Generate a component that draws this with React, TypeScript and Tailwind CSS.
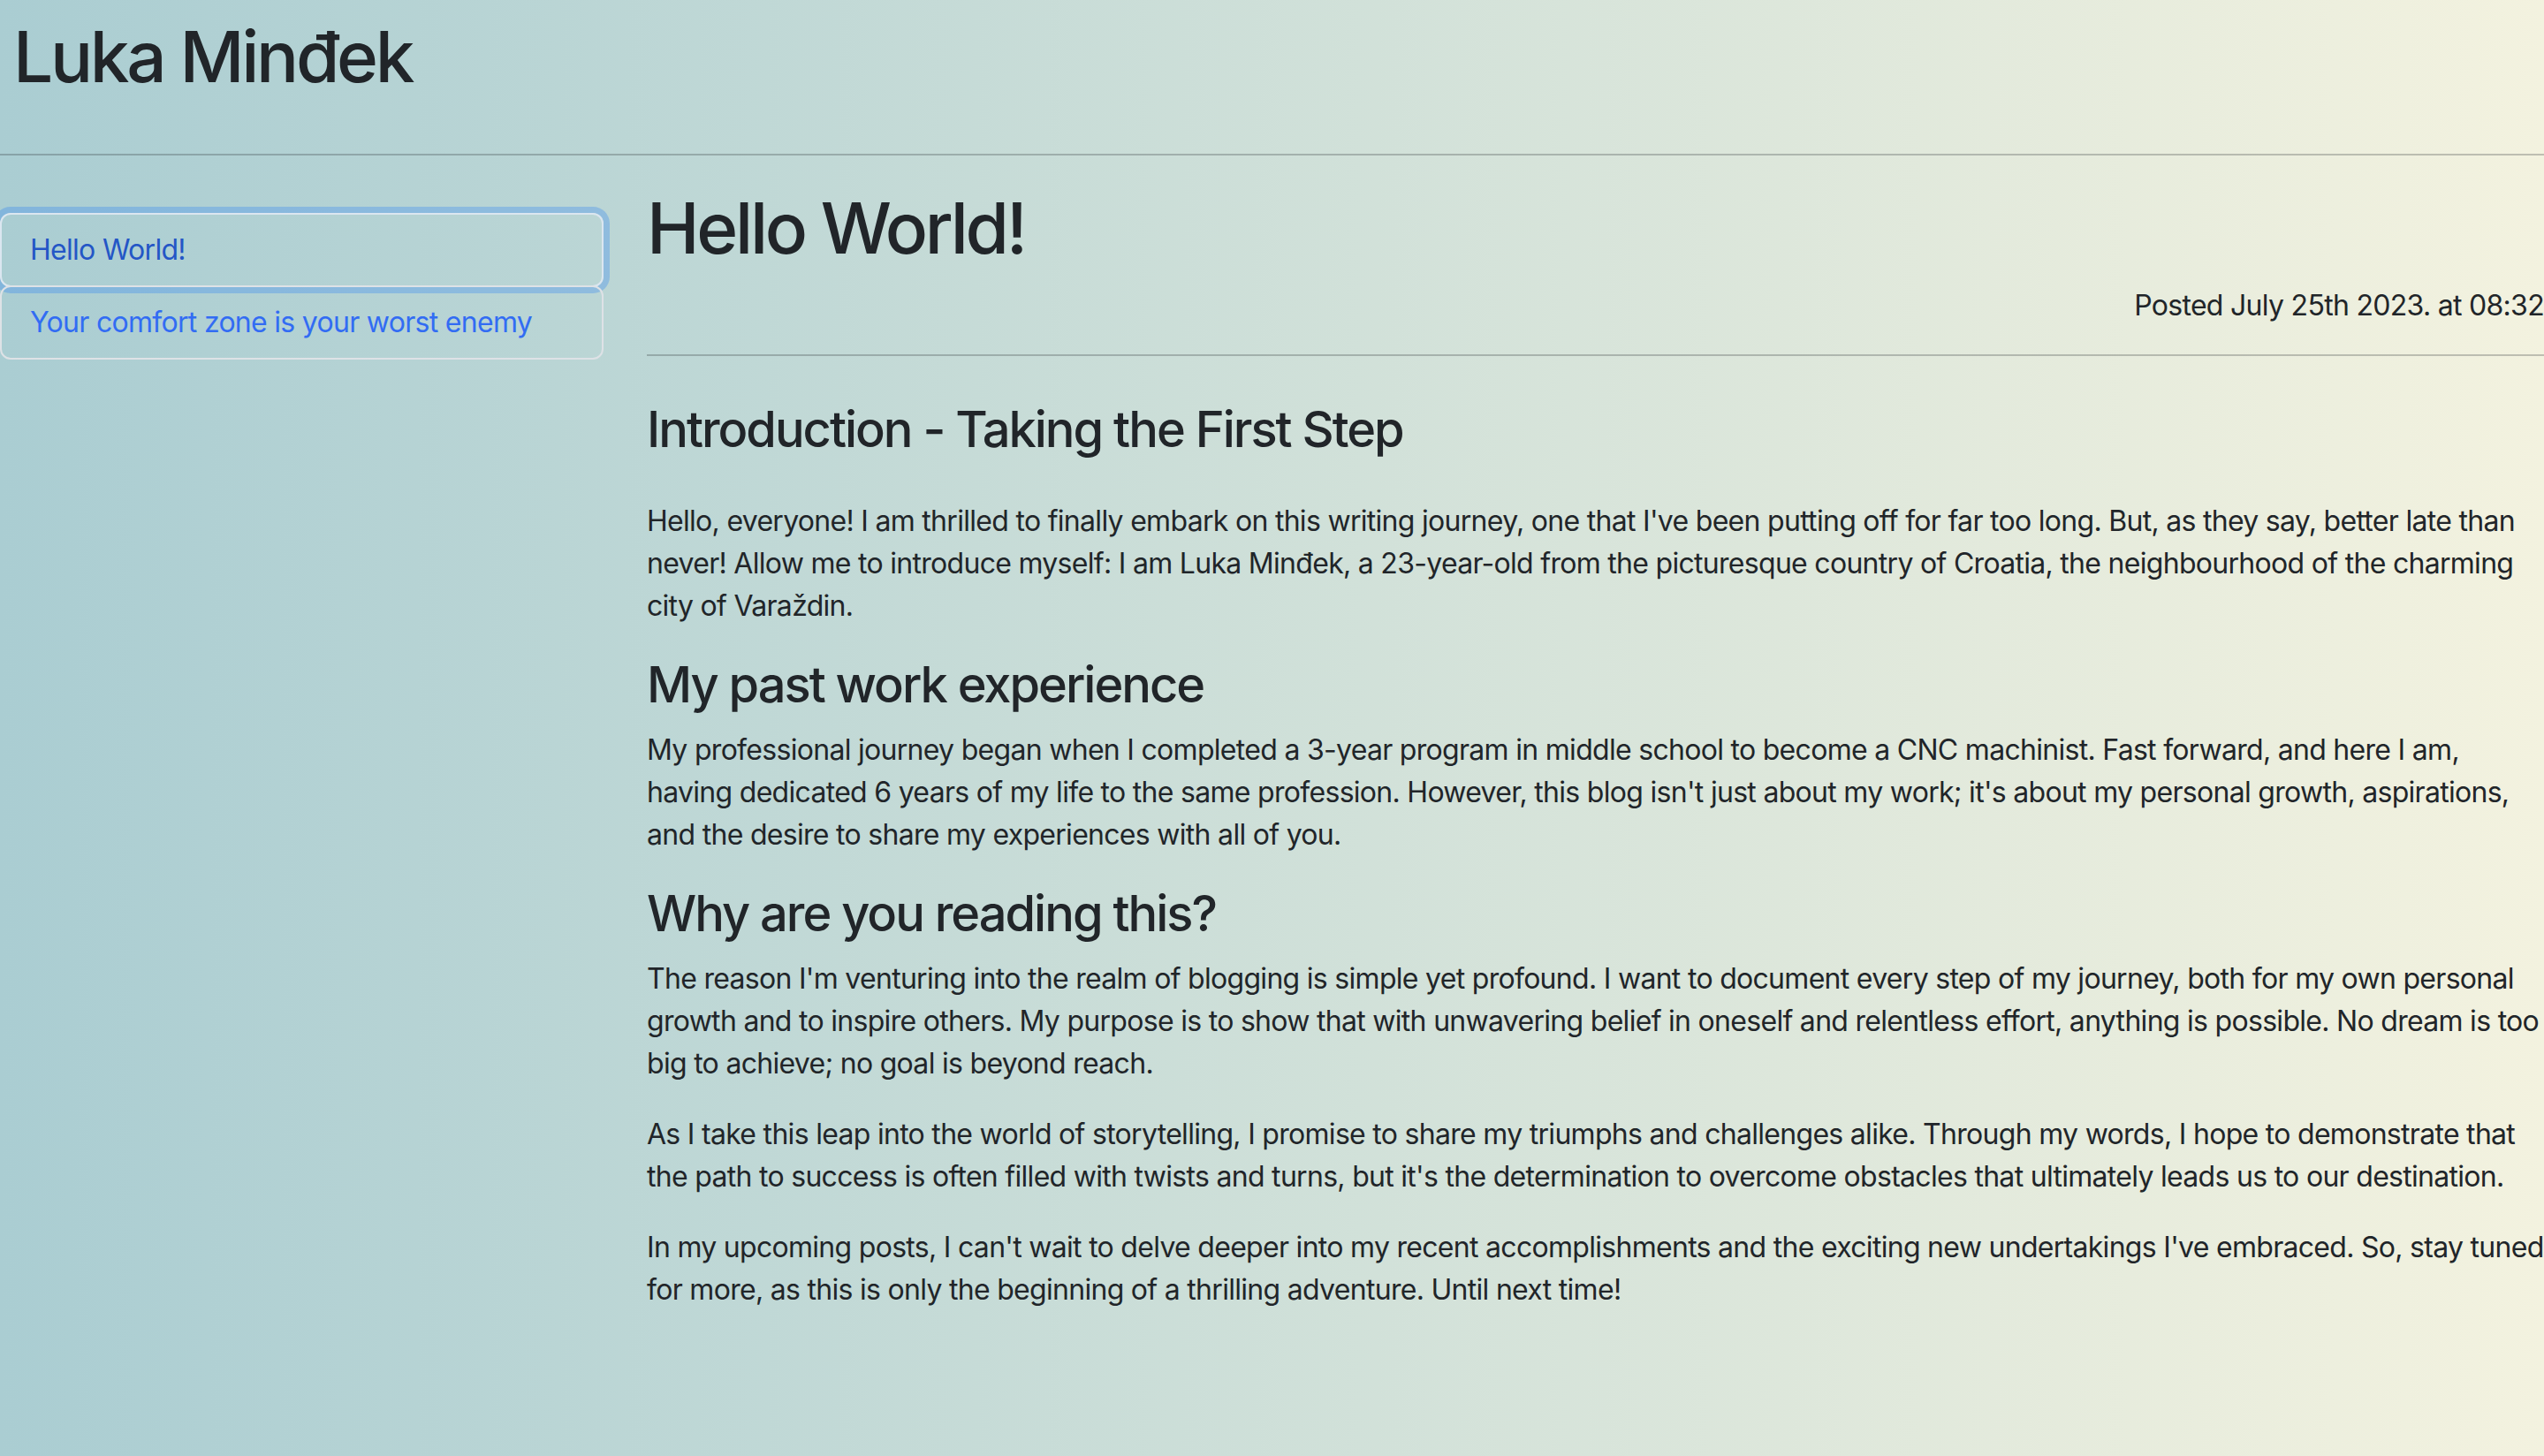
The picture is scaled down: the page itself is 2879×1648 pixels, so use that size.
import React from "react";

const posts = [
  { title: "Hello World!", active: true },
  { title: "Your comfort zone is your worst enemy", active: false },
];

const Sidebar = () => {
  return (
    <aside className="w-[683px] shrink-0 mt-[65px]">
      <ul className="flex flex-col">
        {posts.map((p) => (
          <li
            key={p.title}
            className={
              p.active
                ? "relative rounded-[12px] border-2 border-[#dbe6f0] px-[32px] py-[16px] text-[32px] leading-[48px] tracking-[-0.022em] text-[#2456c6] shadow-[0_0_0_7px_rgba(13,110,253,0.25)]"
                : "relative -mt-[2px] rounded-[12px] border-2 border-[#dee2e6] px-[32px] py-[16px] text-[32px] leading-[48px] tracking-[-0.022em] text-[#326cf3]"
            }
          >
            <a href="#" className="block">
              {p.title}
            </a>
          </li>
        ))}
      </ul>
    </aside>
  );
};

const Post = () => {
  return (
    <article className="ml-[49px] mt-[34px] w-[2147px] shrink-0 text-[32px] leading-[48px] tracking-[-0.022em]">
      <h1 className="text-[80px] leading-[96px] font-medium tracking-[-0.041em] mb-[16px]">Hello World!</h1>
      <p className="text-right">Posted July 25th 2023. at 08:32</p>
      <div className="mt-[31px] h-[2px] bg-[#212529] opacity-25"></div>

      <h3 className="mt-[50px] text-[56px] leading-[67px] font-medium tracking-[-0.036em]">
        Introduction - Taking the First Step
      </h3>
      <p className="mt-[46px] mb-[32px]">
        Hello, everyone! I am thrilled to finally embark on this writing journey, one that I've been putting off for far
        too long. But, as they say, better late than never! Allow me to introduce myself: I am Luka Minđek, a
        23-year-old from the picturesque country of Croatia, the neighbourhood of the charming city of Varaždin.
      </p>

      <h3 className="mb-[16px] text-[56px] leading-[67px] font-medium tracking-[-0.036em]">My past work experience</h3>
      <p className="mb-[32px]">
        My professional journey began when I completed a 3-year program in middle school to become a CNC machinist.
        Fast forward, and here I am, having dedicated 6 years of my life to the same profession. However, this blog
        isn't just about my work; it's about my personal growth, aspirations, and the desire to share my experiences
        with all of you.
      </p>

      <h3 className="mb-[16px] text-[56px] leading-[67px] font-medium tracking-[-0.036em]">Why are you reading this?</h3>
      <p className="mb-[32px]">
        The reason I'm venturing into the realm of blogging is simple yet profound. I want to document every step of
        my journey, both for my own personal growth and to inspire others. My purpose is to show that with unwavering
        belief in oneself and relentless effort, anything is possible. No dream is too big to achieve; no goal is
        beyond reach.
      </p>
      <p className="mb-[32px]">
        As I take this leap into the world of storytelling, I promise to share my triumphs and challenges alike.
        Through my words, I hope to demonstrate that the path to success is often filled with twists and turns, but
        it's the determination to overcome obstacles that ultimately leads us to our destination.
      </p>
      <p className="mb-[32px]">
        In my upcoming posts, I can't wait to delve deeper into my recent accomplishments and the exciting new
        undertakings I've embraced. So, stay tuned for more, as this is only the beginning of a thrilling adventure.
        Until next time!
      </p>
    </article>
  );
};

const App = () => {
  return (
    <div className="min-h-[1648px] w-full overflow-hidden bg-[linear-gradient(to_right,#aacdd2,#f3f2df)] font-['Inter','Liberation_Sans',sans-serif] text-[#212529]">
      <header className="pl-[15px] pt-[16px]">
        <h1 className="text-[80px] leading-[96px] font-medium tracking-[-0.041em]">Luka Minđek</h1>
      </header>
      <div className="mt-[62px] h-[2px] bg-[#212529] opacity-25"></div>
      <main className="flex items-start">
        <Sidebar />
        <Post />
      </main>
    </div>
  );
};

export default App;
